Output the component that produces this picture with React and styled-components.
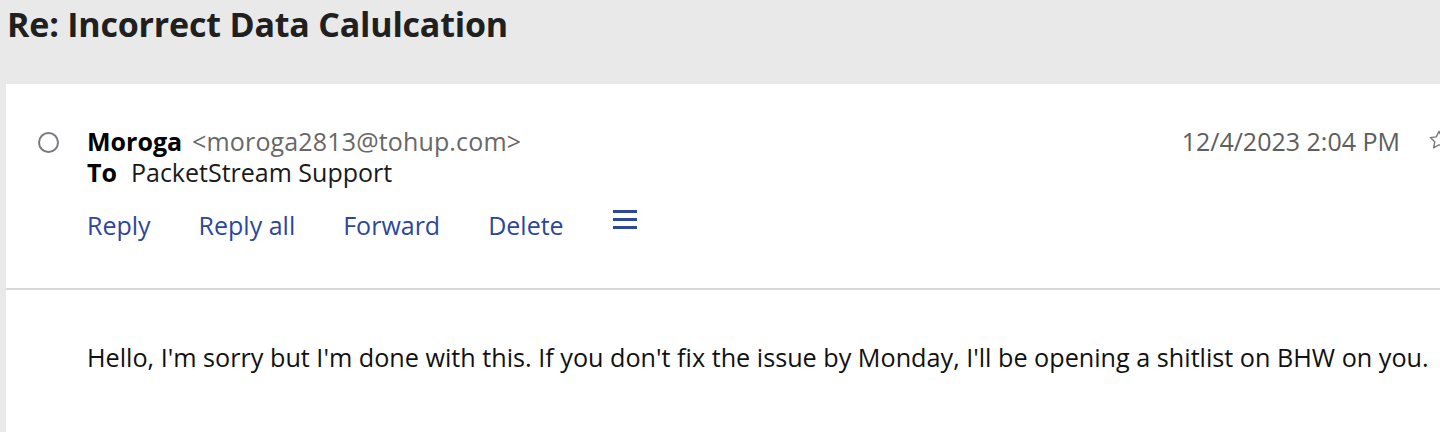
import React from "react";
import styled, { createGlobalStyle } from "styled-components";

const GlobalStyle = createGlobalStyle`
  html, body {
    margin: 0;
    padding: 0;
    background: #e9e9e9;
    font-family: "Open Sans", "Noto Sans", sans-serif;
  }
  #root {
    height: 432px;
    overflow: hidden;
  }
`;

const Page = styled.div`
  display: flex;
  flex-direction: column;
  height: 432px;
  overflow: hidden;
`;

const TitleBar = styled.h1`
  margin: 0;
  height: 84px;
  padding: 1px 0 0 7px;
  box-sizing: border-box;
  font-size: 34px;
  line-height: 46px;
  font-weight: 700;
  color: #202020;
  letter-spacing: -0.2px;
`;

const Card = styled.div`
  flex: 1;
  margin-left: 6px;
  width: calc(100% + 20px);
  background: #ffffff;
  display: flex;
  flex-direction: column;
`;

const Header = styled.div`
  display: grid;
  grid-template-columns: 81px 1fr auto;
  padding: 42px 16px 48px 0;
  border-bottom: 2px solid #d9d9d9;
`;

const Marker = styled.div`
  display: flex;
  justify-content: center;
  align-items: center;
  height: 32px;
  padding-left: 3px;
  box-sizing: border-box;
`;

const Circle = styled.span`
  width: 17px;
  height: 17px;
  border: 2px solid #7a7a84;
  border-radius: 50%;
`;

const Meta = styled.div`
  display: flex;
  flex-direction: column;
`;

const Line = styled.div`
  display: flex;
  align-items: baseline;
  gap: ${(p) => p.$gap || 10}px;
  font-size: 25px;
  line-height: 31px;
  color: #1a1a1a;
`;

const Strong = styled.span`
  font-weight: 700;
  color: #000;
`;

const Muted = styled.span`
  color: #686868;
  letter-spacing: 0.15px;
`;

const Actions = styled.div`
  display: flex;
  align-items: center;
  gap: 48px;
  margin-top: 22px;
  height: 30px;
`;

const Action = styled.span`
  font-size: 25px;
  color: #2d479c;
`;

const Menu = styled.svg`
  width: 26px;
  height: 22px;
  margin-top: -12px;
`;

const Side = styled.div`
  display: flex;
  align-items: flex-start;
  gap: 28px;
`;

const Stamp = styled.span`
  font-size: 25px;
  line-height: 31px;
  color: #5e5e5e;
`;

const Star = styled.svg`
  width: 22px;
  height: 22px;
  margin-top: 3px;
`;

const Body = styled.p`
  margin: 0;
  padding: 52px 0 0 81px;
  font-size: 25.2px;
  line-height: 30px;
  color: #111111;
  white-space: nowrap;
`;

export default function App() {
  return (
    <>
      <GlobalStyle />
      <Page>
        <TitleBar>Re: Incorrect Data Calulcation</TitleBar>
        <Card>
          <Header>
            <Marker>
              <Circle />
            </Marker>
            <Meta>
              <Line>
                <Strong>Moroga</Strong>
                <Muted>&lt;moroga2813@tohup.com&gt;</Muted>
              </Line>
              <Line $gap={14}>
                <Strong>To</Strong>
                <span>PacketStream Support</span>
              </Line>
              <Actions>
                <Action>Reply</Action>
                <Action>Reply all</Action>
                <Action>Forward</Action>
                <Action>Delete</Action>
                <Menu viewBox="0 0 26 22">
                  <rect x="1" y="2" width="24" height="3" fill="#2d479c" />
                  <rect x="1" y="10" width="24" height="3" fill="#2d479c" />
                  <rect x="1" y="18" width="24" height="3" fill="#2d479c" />
                </Menu>
              </Actions>
            </Meta>
            <Side>
              <Stamp>12/4/2023 2:04 PM</Stamp>
              <Star viewBox="0 0 24 24">
                <path
                  d="M12 2.5l2.9 6.1 6.6.8-4.9 4.5 1.3 6.6L12 17.2l-5.9 3.3 1.3-6.6-4.9-4.5 6.6-.8z"
                  fill="none"
                  stroke="#777"
                  strokeWidth="1.5"
                  strokeLinejoin="round"
                />
              </Star>
            </Side>
          </Header>
          <Body>
            Hello, I'm sorry but I'm done with this. If you don't fix the issue by Monday, I'll be opening a shitlist on BHW on you.
          </Body>
        </Card>
      </Page>
    </>
  );
}
